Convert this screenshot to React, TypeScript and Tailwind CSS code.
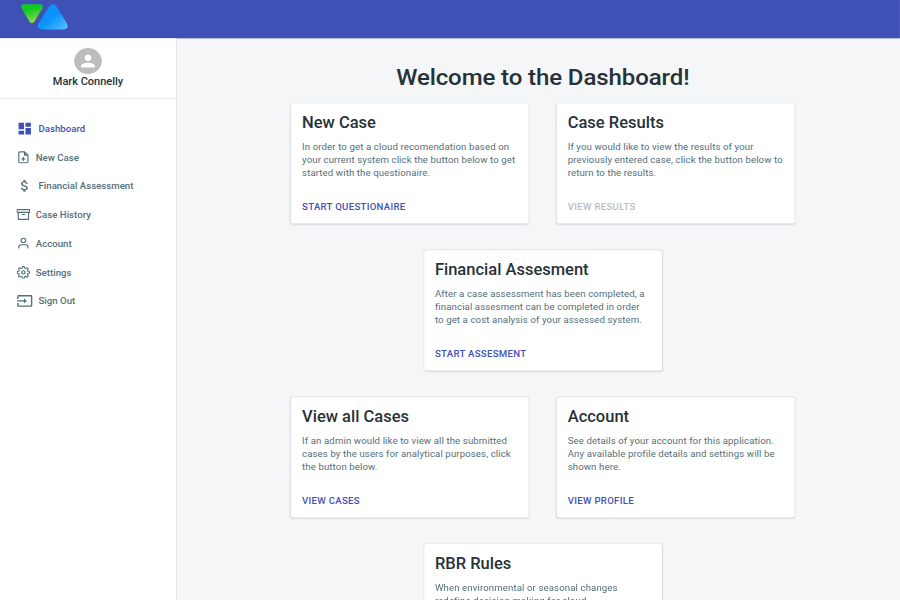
import React from "react";

type CardProps = { title: string; lines: string[]; action: string; disabled?: boolean };

function Card({ title, lines, action, disabled }: CardProps) {
  return (
    <section className="flex h-[185.500px] w-[346px] shrink-0 flex-col rounded-[4px] bg-white shadow-[0_0_0_1px_rgba(63,63,68,0.05),0_1px_3px_0_rgba(63,63,68,0.13)]">
      <div className="h-[134.300px] px-4 pt-4">
        <h2 className="text-2xl leading-[28px] font-medium text-[#263238]">{title}</h2>
        <p className="mt-[13.200px] origin-top scale-y-[1.075] text-sm leading-[18.610px] tracking-[0.16px] whitespace-nowrap text-[#546e7a]">
          {lines.map((line) => (
            <span key={line} className="block">{line}</span>
          ))}
        </p>
      </div>
      <div className="p-2">
        <button className={"block scale-y-[1.09] px-2 py-1.5 text-sm leading-[24.500px] font-medium tracking-[0.42px] whitespace-nowrap " + (disabled ? "text-[#bdbdbd]" : "text-[#3f51b5]")}>
          {action}
        </button>
      </div>
    </section>
  );
}

function Logo() {
  return (
    <svg className="block" width="72.700" height="43" viewBox="0 0 50 28" preserveAspectRatio="none">
      <defs>
        <linearGradient id="green" x1="0" y1="0" x2="0.3" y2="1">
          <stop offset="0.35" stopColor="#0fca20" />
          <stop offset="1" stopColor="#8bd94c" />
        </linearGradient>
        <linearGradient id="blue" x1="0.3" y1="0.3" x2="1" y2="1">
          <stop offset="0.3" stopColor="#0a94fa" />
          <stop offset="1" stopColor="#5cc0ff" />
        </linearGradient>
      </defs>
      <path d="M3.600 1H20.400Q24.300 1.600 22.400 5L14.600 18.300Q12 21.600 9.400 18.300L1.600 5Q-.2 1.600 3.600 1Z" fill="url(#green)" />
      <path d="M29.400 3.300Q33 -1.200 36.600 3.300L47.200 20.600Q49.300 25.500 44 26.200H22Q16.500 25.500 18.600 20.600Z" fill="url(#blue)" />
    </svg>
  );
}

const outline = { fill: "none", stroke: "currentColor", strokeWidth: 2, strokeLinecap: "round", strokeLinejoin: "round" } as const;

const items: { label: string; icon: React.ReactNode; active?: boolean }[] = [
  {
    label: "Dashboard", active: true,
    icon: <svg width="24" height="24" viewBox="0 0 24 24" fill="currentColor"><path d="M3 13h8V3H3v10zm0 8h8v-6H3v6zm10 0h8V11h-8v10zm0-18v6h8V3h-8z" /></svg>,
  },
  {
    label: "New Case",
    icon: <svg width="20" height="20" viewBox="0 0 24 24" {...outline}><path d="M14 2H6a2 2 0 0 0-2 2v16a2 2 0 0 0 2 2h12a2 2 0 0 0 2-2V8zM14 2v6h6M12 18v-6M9 15h6" /></svg>,
  },
  {
    label: "Financial Assessment",
    icon: <svg width="24" height="24" viewBox="0 0 24 24" fill="currentColor"><path d="M11.800 10.900c-2.270-.59-3-1.200-3-2.150 0-1.090 1.010-1.850 2.700-1.850 1.780 0 2.440.85 2.500 2.100h2.210c-.07-1.720-1.120-3.300-3.210-3.810V3h-3v2.160c-1.940.42-3.500 1.680-3.500 3.610 0 2.310 1.910 3.460 4.700 4.130 2.500.6 3 1.480 3 2.410 0 .69-.49 1.790-2.700 1.790-2.060 0-2.870-.92-2.980-2.100h-2.200c.12 2.190 1.760 3.420 3.680 3.830V21h3v-2.150c1.950-.37 3.500-1.500 3.500-3.550 0-2.840-2.430-3.810-4.700-4.400z" /></svg>,
  },
  {
    label: "Case History",
    icon: <svg width="20" height="20" viewBox="0 0 24 24" {...outline}><path d="M21 8v13H3V8M1 3h22v5H1zM10 12h4" /></svg>,
  },
  {
    label: "Account",
    icon: <svg width="20" height="20" viewBox="0 0 24 24" {...outline}><path d="M20 21v-2a4 4 0 0 0-4-4H8a4 4 0 0 0-4 4v2" /><circle cx="12" cy="7" r="4" /></svg>,
  },
  {
    label: "Settings",
    icon: <svg width="20" height="20" viewBox="0 0 24 24" {...outline}><circle cx="12" cy="12" r="3" /><path d="M19.400 15a1.650 1.650 0 0 0 .33 1.820l.06.06a2 2 0 0 1-2.830 2.830l-.06-.06a1.650 1.650 0 0 0-1.820-.33 1.650 1.650 0 0 0-1 1.510V21a2 2 0 0 1-4 0v-.09A1.650 1.650 0 0 0 9 19.400a1.650 1.650 0 0 0-1.820.33l-.06.06a2 2 0 0 1-2.830-2.830l.06-.06a1.650 1.650 0 0 0 .33-1.820 1.650 1.650 0 0 0-1.510-1H3a2 2 0 0 1 0-4h.09A1.650 1.650 0 0 0 4.600 9a1.650 1.650 0 0 0-.33-1.820l-.06-.06a2 2 0 0 1 2.830-2.830l.06.06a1.650 1.650 0 0 0 1.820.33H9a1.650 1.650 0 0 0 1-1.510V3a2 2 0 0 1 4 0v.09a1.650 1.650 0 0 0 1 1.510 1.650 1.650 0 0 0 1.820-.33l.06-.06a2 2 0 0 1 2.830 2.830l-.06.06a1.650 1.650 0 0 0-.33 1.820V9a1.650 1.650 0 0 0 1.510 1H21a2 2 0 0 1 0 4h-.09a1.650 1.650 0 0 0-1.510 1z" /></svg>,
  },
  {
    label: "Sign Out",
    icon: <svg width="24" height="24" viewBox="0 0 24 24" fill="currentColor"><path d="M21 3.010H3c-1.100 0-2 .9-2 2V9h2V4.990h18v14.030H3V15H1v4.010c0 1.100.9 1.980 2 1.980h18c1.100 0 2-.88 2-1.980v-14c0-1.110-.9-2-2-2zM11 16l4-4-4-4v3H1v2h10v3z" /></svg>,
  },
];

export default function App() {
  return (
    <div className="h-[600px] w-[900px] overflow-hidden bg-[#f4f6f8]">
      <div className="flex h-[923.100px] w-[1309.100px] origin-top-left scale-x-[0.6875] scale-y-[0.65] flex-col overflow-hidden bg-[#f4f6f8] font-['Roboto',sans-serif]">
        <header className="h-[58.500px] shrink-0 bg-[#3f51b5] pt-[4.600px] pl-[28.500px]">
          <Logo />
        </header>
        <div className="flex min-h-0 flex-1">
          <aside className="w-[257px] shrink-0 border-r border-[#dcdfe1] bg-white">
            <div className="flex h-[93.500px] flex-col items-center border-b border-[#dcdfe1] pt-[15.500px]">
              <div className="flex size-10 items-center justify-center rounded-full bg-[#bdbdbd] text-white">
                <svg width="30" height="30" viewBox="0 0 24 24" fill="currentColor"><path d="M12 12c2.210 0 4-1.790 4-4s-1.790-4-4-4-4 1.790-4 4 1.790 4 4 4zm0 2c-2.670 0-8 1.340-8 4v2h16v-2c0-2.660-5.330-4-8-4z" /></svg>
              </div>
              <div className="mt-px scale-y-[1.06] text-base leading-[20px] font-medium text-[#263238]">Mark Connelly</div>
            </div>
            <nav className="pt-[24px] pl-6">
              {items.map((item) => (
                <div key={item.label} className={"flex h-[44.100px] items-center gap-2 text-sm font-medium " + (item.active ? "text-[#3f51b5]" : "text-[#546e7a]")}>
                  {item.icon}
                  <span className="scale-y-[1.09] tracking-[0.020px]">{item.label}</span>
                </div>
              ))}
            </nav>
          </aside>
          <main className="flex min-w-0 flex-1 flex-col items-center pl-[13px]">
            <h1 className="mt-[39px] text-[35px] leading-[42px] font-medium tracking-[-0.180px] whitespace-nowrap text-[#263238]">Welcome to the Dashboard!</h1>
            <div className="mt-[19.200px] flex w-[733px] shrink-0 flex-wrap content-start justify-center gap-x-[40.400px] gap-y-[40.600px]">
              <Card title="New Case" lines={["In order to get a cloud recomendation based on", "your current system click the button below to get", "started with the questionaire."]} action="START QUESTIONAIRE" />
              <Card title="Case Results" disabled lines={["If you would like to view the results of your", "previously entered case, click the button below to", "return to the results."]} action="VIEW RESULTS" />
              <div className="flex w-full justify-center">
                <Card title="Financial Assesment" lines={["After a case assessment has been completed, a", "financial assesment can be completed in order", "to get a cost analysis of your assessed system."]} action="START ASSESMENT" />
              </div>
              <Card title="View all Cases" lines={["If an admin would like to view all the submitted", "cases by the users for analytical purposes, click", "the button below."]} action="VIEW CASES" />
              <Card title="Account" lines={["See details of your account for this application.", "Any available profile details and settings will be", "shown here."]} action="VIEW PROFILE" />
              <div className="flex w-full justify-center">
                <Card title="RBR Rules" lines={["When environmental or seasonal changes", "redefine decision making for cloud"]} action="VIEW RULES" />
              </div>
            </div>
          </main>
        </div>
      </div>
    </div>
  );
}
